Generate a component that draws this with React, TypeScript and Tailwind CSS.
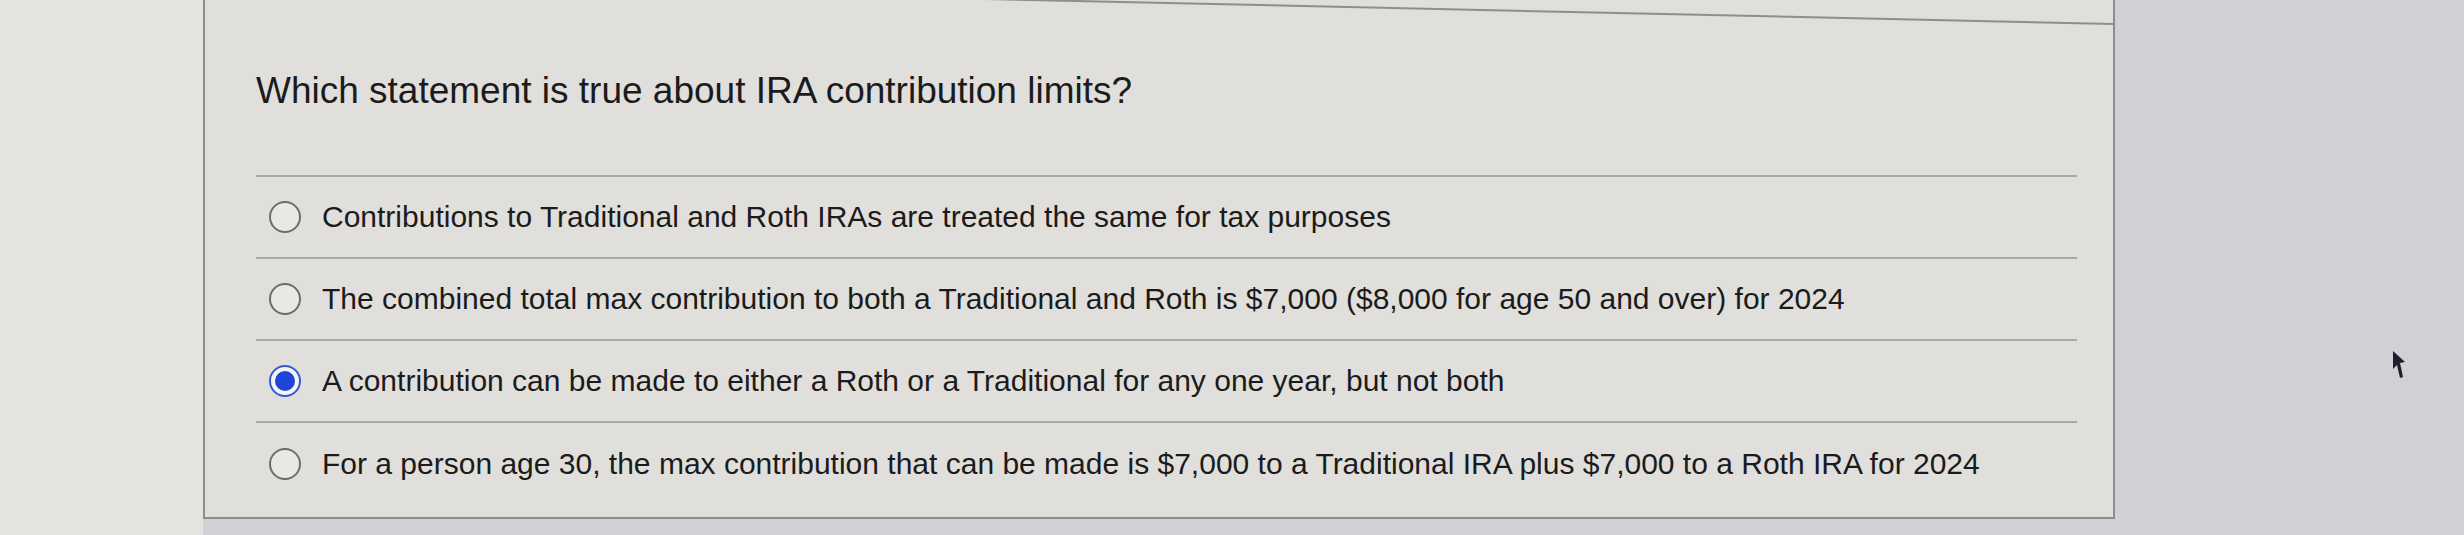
import { useState } from "react"

type Option = {
  id: string
  label: string
}

const options: Option[] = [
  { id: "a", label: "Contributions to Traditional and Roth IRAs are treated the same for tax purposes" },
  {
    id: "b",
    label:
      "The combined total max contribution to both a Traditional and Roth is $7,000 ($8,000 for age 50 and over) for 2024",
  },
  { id: "c", label: "A contribution can be made to either a Roth or a Traditional for any one year, but not both" },
  {
    id: "d",
    label:
      "For a person age 30, the max contribution that can be made is $7,000 to a Traditional IRA plus $7,000 to a Roth IRA for 2024",
  },
]

function Radio({ checked }: { checked: boolean }) {
  if (checked) {
    return (
      <span className="flex h-[32px] w-[32px] shrink-0 items-center justify-center rounded-full border-2 border-[#3557d6] bg-[#f4f4f6]">
        <span className="h-[20px] w-[20px] rounded-full bg-[#1d45d8]" />
      </span>
    )
  }
  return <span className="h-[32px] w-[32px] shrink-0 rounded-full border-2 border-[#6c6c6c] bg-[#e9e8e5]" />
}

export default function App() {
  const [selected, setSelected] = useState("c")

  return (
    <div className="flex h-[535px] w-[2464px] overflow-hidden bg-[#d3d1d5] font-['Liberation_Sans',Arial,sans-serif] text-[#1b1b1b]">
      {/* left margin of the page */}
      <div className="w-[203px] shrink-0 bg-[#e5e4e0]" />

      {/* Question card */}
      <div className="relative flex h-[519px] w-[1912px] shrink-0 flex-col border-x-2 border-b-2 border-[#8e8d8d] bg-[#e0dfdb] pl-[51px] pr-[36px]">
        <svg className="absolute left-0 top-0 h-[30px] w-full" viewBox="0 0 1908 30" preserveAspectRatio="none">
          <line x1="735" y1="-2" x2="1908" y2="24" stroke="#8f8e8f" strokeWidth="2" />
        </svg>

        <h1 className="mt-[70px] text-[37px] leading-[42px]">Which statement is true about IRA contribution limits?</h1>

        <div className="mt-[63px] border-t-2 border-[#aaa9a6]">
          {options.map((opt, i) => (
            <label
              key={opt.id}
              onClick={() => setSelected(opt.id)}
              className={
                i < options.length - 1
                  ? "flex h-[82px] cursor-pointer items-center gap-[21px] border-b-2 border-[#aaa9a6] pl-[13px]"
                  : "flex h-[82px] cursor-pointer items-center gap-[21px] pl-[13px]"
              }
            >
              <Radio checked={selected === opt.id} />
              <span className="whitespace-nowrap text-[30px] leading-[34px]">{opt.label}</span>
            </label>
          ))}
        </div>
      </div>

      {/* right side of the screen, mouse pointer */}
      <div className="relative flex-1 bg-[#d2d0d5]">
        <svg className="absolute left-[276px] top-[350px] h-[30px] w-[16px]" viewBox="0 0 16 30">
          <path d="M2 1 L14 12 L9 13 L12 27 L9 28 L6 15 L2 19 Z" fill="#1d1f2a" />
        </svg>
      </div>
    </div>
  )
}
